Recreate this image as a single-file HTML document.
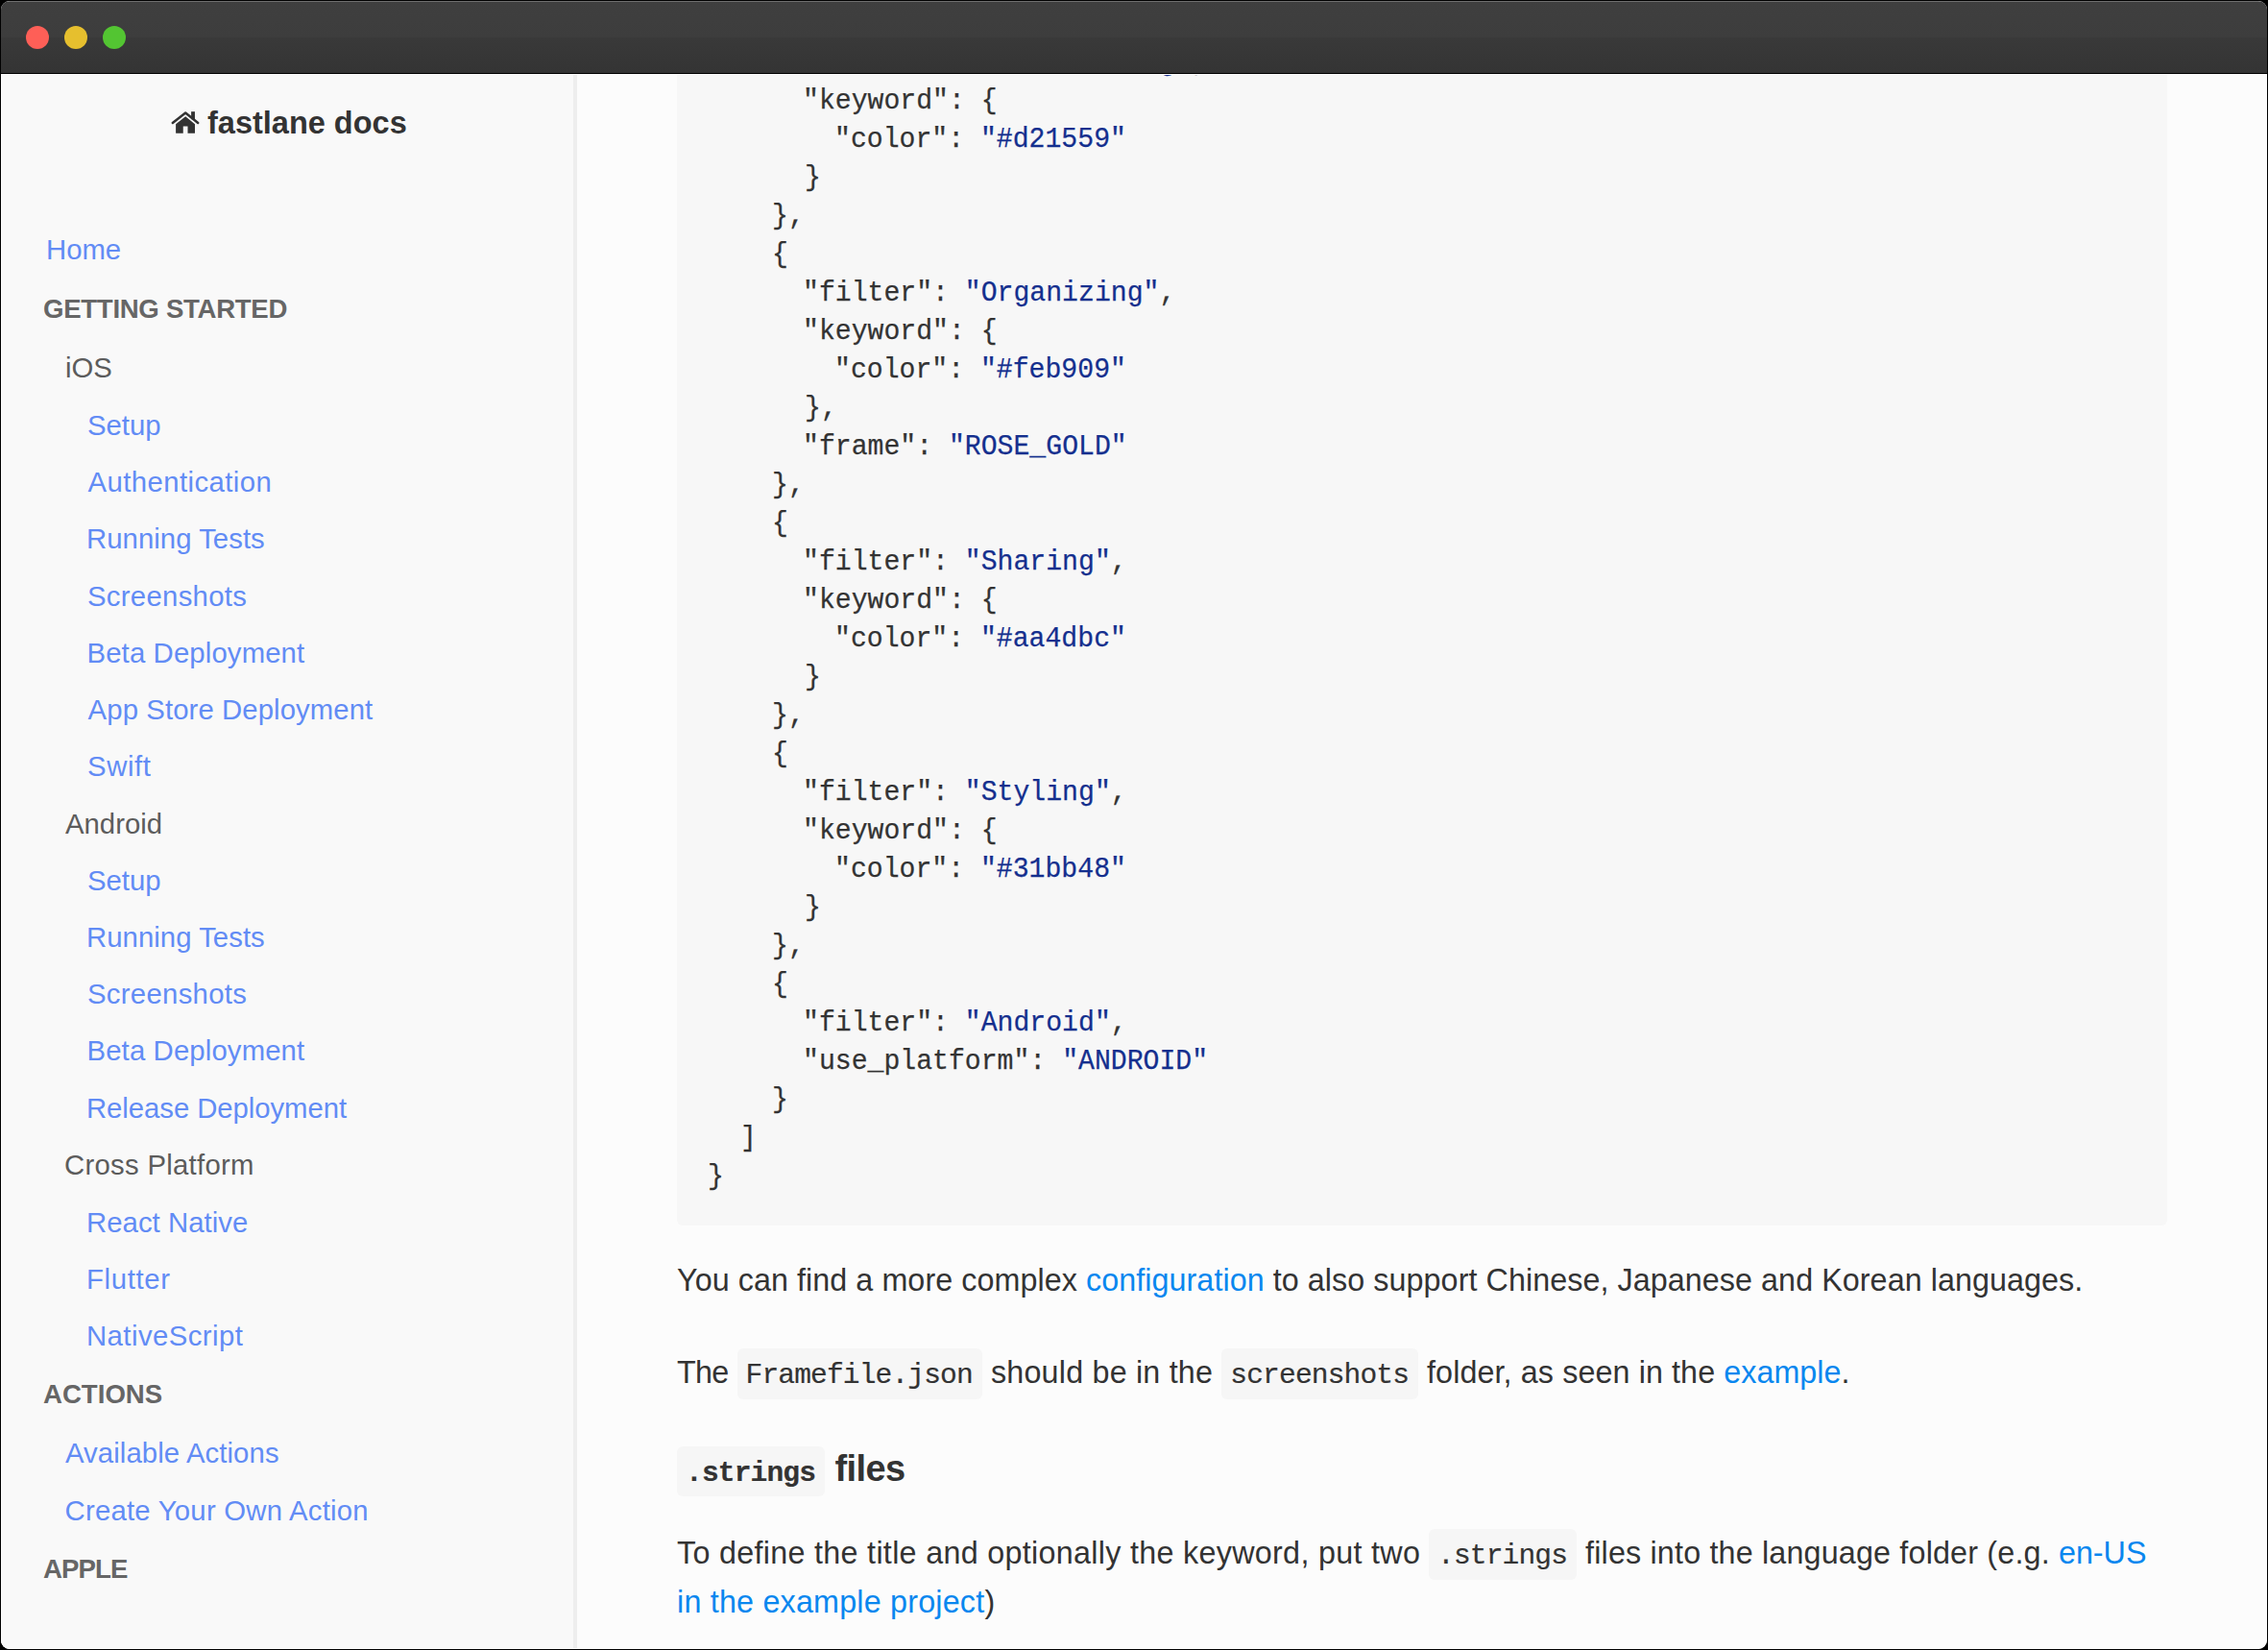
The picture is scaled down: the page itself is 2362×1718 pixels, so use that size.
<!DOCTYPE html>
<html><head><meta charset="utf-8"><style>
html,body{margin:0;padding:0;background:#000;width:2362px;height:1718px;overflow:hidden}
.win{position:absolute;left:1px;top:1px;width:2360px;height:1716px;border-radius:9px;overflow:hidden;background:#fcfcfc}
.in{position:absolute;left:-1px;top:-1px;width:2362px;height:1718px}
.tb{position:absolute;left:0;top:1px;width:2362px;height:74px;background:linear-gradient(#3f3f3f 0%,#3d3d3d 49%,#393939 51%,#343434 100%);border-top:1px solid #6e6e6e;border-bottom:1px solid #000}
.edge{position:absolute;left:1px;top:77px;width:2358px;height:1638px;border:1px solid #fff;border-radius:0 0 9px 9px}
.dot{position:absolute;top:27px;width:24px;height:24px;border-radius:50%}
.side{position:absolute;left:0;top:77px;width:597px;height:1641px;background:#f9f9f9}
.sbr{position:absolute;left:597px;top:77px;width:4px;height:1641px;background:#eeeeee}
.code{position:absolute;left:705px;top:40px;width:1552px;height:1236px;background:#f7f7f7;border-radius:6px}
.t{position:absolute;white-space:pre}
.ic{font-family:'Liberation Mono',monospace;font-size:29.6px;letter-spacing:-0.88px;background:#f6f6f6;border-radius:6px;padding:10.8px 9.9px 7.9px 9px;-webkit-text-stroke:0.2px currentColor}
</style></head><body>
<div class="win"><div class="in">
<div class="side"></div>
<div class="sbr"></div>
<div class="code"></div>
<div class="t" style="left:216.00px;top:112.48px;font-size:32.5px;line-height:32.5px;color:#333333;font-weight:700;font-family:'Liberation Sans', sans-serif;">fastlane docs</div>
<div class="t" style="left:48.00px;top:245.19px;font-size:29.3px;line-height:29.3px;color:#628cf5;font-weight:400;font-family:'Liberation Sans', sans-serif;letter-spacing:0px;">Home</div>
<div class="t" style="left:45.00px;top:307.63px;font-size:27.6px;line-height:27.6px;color:#666666;font-weight:700;font-family:'Liberation Sans', sans-serif;letter-spacing:-0.3px;">GETTING STARTED</div>
<div class="t" style="left:68.00px;top:367.69px;font-size:29.3px;line-height:29.3px;color:#5c5c5c;font-weight:400;font-family:'Liberation Sans', sans-serif;letter-spacing:0px;">iOS</div>
<div class="t" style="left:91.00px;top:428.19px;font-size:29.3px;line-height:29.3px;color:#628cf5;font-weight:400;font-family:'Liberation Sans', sans-serif;letter-spacing:0px;">Setup</div>
<div class="t" style="left:91.60px;top:487.39px;font-size:29.3px;line-height:29.3px;color:#628cf5;font-weight:400;font-family:'Liberation Sans', sans-serif;letter-spacing:0.42px;">Authentication</div>
<div class="t" style="left:90.00px;top:546.39px;font-size:29.3px;line-height:29.3px;color:#628cf5;font-weight:400;font-family:'Liberation Sans', sans-serif;letter-spacing:0.05px;">Running Tests</div>
<div class="t" style="left:91.00px;top:605.99px;font-size:29.3px;line-height:29.3px;color:#628cf5;font-weight:400;font-family:'Liberation Sans', sans-serif;letter-spacing:0.3px;">Screenshots</div>
<div class="t" style="left:90.50px;top:664.99px;font-size:29.3px;line-height:29.3px;color:#628cf5;font-weight:400;font-family:'Liberation Sans', sans-serif;letter-spacing:0.14px;">Beta Deployment</div>
<div class="t" style="left:91.60px;top:724.19px;font-size:29.3px;line-height:29.3px;color:#628cf5;font-weight:400;font-family:'Liberation Sans', sans-serif;letter-spacing:0.1px;">App Store Deployment</div>
<div class="t" style="left:91.00px;top:783.39px;font-size:29.3px;line-height:29.3px;color:#628cf5;font-weight:400;font-family:'Liberation Sans', sans-serif;letter-spacing:0.6px;">Swift</div>
<div class="t" style="left:68.00px;top:842.59px;font-size:29.3px;line-height:29.3px;color:#5c5c5c;font-weight:400;font-family:'Liberation Sans', sans-serif;letter-spacing:0px;">Android</div>
<div class="t" style="left:91.00px;top:901.79px;font-size:29.3px;line-height:29.3px;color:#628cf5;font-weight:400;font-family:'Liberation Sans', sans-serif;letter-spacing:0px;">Setup</div>
<div class="t" style="left:90.00px;top:960.99px;font-size:29.3px;line-height:29.3px;color:#628cf5;font-weight:400;font-family:'Liberation Sans', sans-serif;letter-spacing:0.05px;">Running Tests</div>
<div class="t" style="left:91.00px;top:1020.19px;font-size:29.3px;line-height:29.3px;color:#628cf5;font-weight:400;font-family:'Liberation Sans', sans-serif;letter-spacing:0.3px;">Screenshots</div>
<div class="t" style="left:90.50px;top:1079.39px;font-size:29.3px;line-height:29.3px;color:#628cf5;font-weight:400;font-family:'Liberation Sans', sans-serif;letter-spacing:0.14px;">Beta Deployment</div>
<div class="t" style="left:90.00px;top:1138.59px;font-size:29.3px;line-height:29.3px;color:#628cf5;font-weight:400;font-family:'Liberation Sans', sans-serif;letter-spacing:-0.05px;">Release Deployment</div>
<div class="t" style="left:67.00px;top:1197.79px;font-size:29.3px;line-height:29.3px;color:#5c5c5c;font-weight:400;font-family:'Liberation Sans', sans-serif;letter-spacing:0.29px;">Cross Platform</div>
<div class="t" style="left:90.00px;top:1258.19px;font-size:29.3px;line-height:29.3px;color:#628cf5;font-weight:400;font-family:'Liberation Sans', sans-serif;letter-spacing:0.05px;">React Native</div>
<div class="t" style="left:90.00px;top:1317.19px;font-size:29.3px;line-height:29.3px;color:#628cf5;font-weight:400;font-family:'Liberation Sans', sans-serif;letter-spacing:0.67px;">Flutter</div>
<div class="t" style="left:90.00px;top:1375.69px;font-size:29.3px;line-height:29.3px;color:#628cf5;font-weight:400;font-family:'Liberation Sans', sans-serif;letter-spacing:0.45px;">NativeScript</div>
<div class="t" style="left:45.00px;top:1438.13px;font-size:27.6px;line-height:27.6px;color:#666666;font-weight:700;font-family:'Liberation Sans', sans-serif;letter-spacing:0.0px;">ACTIONS</div>
<div class="t" style="left:68.00px;top:1497.99px;font-size:29.3px;line-height:29.3px;color:#628cf5;font-weight:400;font-family:'Liberation Sans', sans-serif;letter-spacing:0.1px;">Available Actions</div>
<div class="t" style="left:67.50px;top:1558.19px;font-size:29.3px;line-height:29.3px;color:#628cf5;font-weight:400;font-family:'Liberation Sans', sans-serif;letter-spacing:0.24px;">Create Your Own Action</div>
<div class="t" style="left:45.00px;top:1620.23px;font-size:27.6px;line-height:27.6px;color:#666666;font-weight:700;font-family:'Liberation Sans', sans-serif;letter-spacing:-0.8999999999999999px;">APPLE</div>
<div class="t" style="left:835.68px;top:51.48px;font-size:29.0px;line-height:29.0px;color:#333333;font-weight:400;font-family:'Liberation Mono', monospace;transform:scaleX(0.9701);transform-origin:0 0;-webkit-text-stroke:0.25px currentColor;"><span style="color:#333333">&quot;filter&quot;: </span><span style="color:#142f8e">&quot;Broadcasting&quot;</span><span style="color:#333333">,</span></div>
<div class="t" style="left:835.68px;top:91.48px;font-size:29.0px;line-height:29.0px;color:#333333;font-weight:400;font-family:'Liberation Mono', monospace;transform:scaleX(0.9701);transform-origin:0 0;-webkit-text-stroke:0.25px currentColor;"><span style="color:#333333">&quot;keyword&quot;: {</span></div>
<div class="t" style="left:869.44px;top:131.48px;font-size:29.0px;line-height:29.0px;color:#333333;font-weight:400;font-family:'Liberation Mono', monospace;transform:scaleX(0.9701);transform-origin:0 0;-webkit-text-stroke:0.25px currentColor;"><span style="color:#333333">&quot;color&quot;: </span><span style="color:#142f8e">&quot;#d21559&quot;</span></div>
<div class="t" style="left:838.18px;top:171.48px;font-size:29.0px;line-height:29.0px;color:#333333;font-weight:400;font-family:'Liberation Mono', monospace;transform:scaleX(0.9701);transform-origin:0 0;-webkit-text-stroke:0.25px currentColor;"><span style="color:#333333">}</span></div>
<div class="t" style="left:804.42px;top:211.48px;font-size:29.0px;line-height:29.0px;color:#333333;font-weight:400;font-family:'Liberation Mono', monospace;transform:scaleX(0.9701);transform-origin:0 0;-webkit-text-stroke:0.25px currentColor;"><span style="color:#333333">},</span></div>
<div class="t" style="left:804.42px;top:251.48px;font-size:29.0px;line-height:29.0px;color:#333333;font-weight:400;font-family:'Liberation Mono', monospace;transform:scaleX(0.9701);transform-origin:0 0;-webkit-text-stroke:0.25px currentColor;"><span style="color:#333333">{</span></div>
<div class="t" style="left:835.68px;top:291.48px;font-size:29.0px;line-height:29.0px;color:#333333;font-weight:400;font-family:'Liberation Mono', monospace;transform:scaleX(0.9701);transform-origin:0 0;-webkit-text-stroke:0.25px currentColor;"><span style="color:#333333">&quot;filter&quot;: </span><span style="color:#142f8e">&quot;Organizing&quot;</span><span style="color:#333333">,</span></div>
<div class="t" style="left:835.68px;top:331.48px;font-size:29.0px;line-height:29.0px;color:#333333;font-weight:400;font-family:'Liberation Mono', monospace;transform:scaleX(0.9701);transform-origin:0 0;-webkit-text-stroke:0.25px currentColor;"><span style="color:#333333">&quot;keyword&quot;: {</span></div>
<div class="t" style="left:869.44px;top:371.48px;font-size:29.0px;line-height:29.0px;color:#333333;font-weight:400;font-family:'Liberation Mono', monospace;transform:scaleX(0.9701);transform-origin:0 0;-webkit-text-stroke:0.25px currentColor;"><span style="color:#333333">&quot;color&quot;: </span><span style="color:#142f8e">&quot;#feb909&quot;</span></div>
<div class="t" style="left:838.18px;top:411.48px;font-size:29.0px;line-height:29.0px;color:#333333;font-weight:400;font-family:'Liberation Mono', monospace;transform:scaleX(0.9701);transform-origin:0 0;-webkit-text-stroke:0.25px currentColor;"><span style="color:#333333">},</span></div>
<div class="t" style="left:835.68px;top:451.48px;font-size:29.0px;line-height:29.0px;color:#333333;font-weight:400;font-family:'Liberation Mono', monospace;transform:scaleX(0.9701);transform-origin:0 0;-webkit-text-stroke:0.25px currentColor;"><span style="color:#333333">&quot;frame&quot;: </span><span style="color:#142f8e">&quot;ROSE_GOLD&quot;</span></div>
<div class="t" style="left:804.42px;top:491.48px;font-size:29.0px;line-height:29.0px;color:#333333;font-weight:400;font-family:'Liberation Mono', monospace;transform:scaleX(0.9701);transform-origin:0 0;-webkit-text-stroke:0.25px currentColor;"><span style="color:#333333">},</span></div>
<div class="t" style="left:804.42px;top:531.48px;font-size:29.0px;line-height:29.0px;color:#333333;font-weight:400;font-family:'Liberation Mono', monospace;transform:scaleX(0.9701);transform-origin:0 0;-webkit-text-stroke:0.25px currentColor;"><span style="color:#333333">{</span></div>
<div class="t" style="left:835.68px;top:571.48px;font-size:29.0px;line-height:29.0px;color:#333333;font-weight:400;font-family:'Liberation Mono', monospace;transform:scaleX(0.9701);transform-origin:0 0;-webkit-text-stroke:0.25px currentColor;"><span style="color:#333333">&quot;filter&quot;: </span><span style="color:#142f8e">&quot;Sharing&quot;</span><span style="color:#333333">,</span></div>
<div class="t" style="left:835.68px;top:611.48px;font-size:29.0px;line-height:29.0px;color:#333333;font-weight:400;font-family:'Liberation Mono', monospace;transform:scaleX(0.9701);transform-origin:0 0;-webkit-text-stroke:0.25px currentColor;"><span style="color:#333333">&quot;keyword&quot;: {</span></div>
<div class="t" style="left:869.44px;top:651.48px;font-size:29.0px;line-height:29.0px;color:#333333;font-weight:400;font-family:'Liberation Mono', monospace;transform:scaleX(0.9701);transform-origin:0 0;-webkit-text-stroke:0.25px currentColor;"><span style="color:#333333">&quot;color&quot;: </span><span style="color:#142f8e">&quot;#aa4dbc&quot;</span></div>
<div class="t" style="left:838.18px;top:691.48px;font-size:29.0px;line-height:29.0px;color:#333333;font-weight:400;font-family:'Liberation Mono', monospace;transform:scaleX(0.9701);transform-origin:0 0;-webkit-text-stroke:0.25px currentColor;"><span style="color:#333333">}</span></div>
<div class="t" style="left:804.42px;top:731.48px;font-size:29.0px;line-height:29.0px;color:#333333;font-weight:400;font-family:'Liberation Mono', monospace;transform:scaleX(0.9701);transform-origin:0 0;-webkit-text-stroke:0.25px currentColor;"><span style="color:#333333">},</span></div>
<div class="t" style="left:804.42px;top:771.48px;font-size:29.0px;line-height:29.0px;color:#333333;font-weight:400;font-family:'Liberation Mono', monospace;transform:scaleX(0.9701);transform-origin:0 0;-webkit-text-stroke:0.25px currentColor;"><span style="color:#333333">{</span></div>
<div class="t" style="left:835.68px;top:811.48px;font-size:29.0px;line-height:29.0px;color:#333333;font-weight:400;font-family:'Liberation Mono', monospace;transform:scaleX(0.9701);transform-origin:0 0;-webkit-text-stroke:0.25px currentColor;"><span style="color:#333333">&quot;filter&quot;: </span><span style="color:#142f8e">&quot;Styling&quot;</span><span style="color:#333333">,</span></div>
<div class="t" style="left:835.68px;top:851.48px;font-size:29.0px;line-height:29.0px;color:#333333;font-weight:400;font-family:'Liberation Mono', monospace;transform:scaleX(0.9701);transform-origin:0 0;-webkit-text-stroke:0.25px currentColor;"><span style="color:#333333">&quot;keyword&quot;: {</span></div>
<div class="t" style="left:869.44px;top:891.48px;font-size:29.0px;line-height:29.0px;color:#333333;font-weight:400;font-family:'Liberation Mono', monospace;transform:scaleX(0.9701);transform-origin:0 0;-webkit-text-stroke:0.25px currentColor;"><span style="color:#333333">&quot;color&quot;: </span><span style="color:#142f8e">&quot;#31bb48&quot;</span></div>
<div class="t" style="left:838.18px;top:931.48px;font-size:29.0px;line-height:29.0px;color:#333333;font-weight:400;font-family:'Liberation Mono', monospace;transform:scaleX(0.9701);transform-origin:0 0;-webkit-text-stroke:0.25px currentColor;"><span style="color:#333333">}</span></div>
<div class="t" style="left:804.42px;top:971.48px;font-size:29.0px;line-height:29.0px;color:#333333;font-weight:400;font-family:'Liberation Mono', monospace;transform:scaleX(0.9701);transform-origin:0 0;-webkit-text-stroke:0.25px currentColor;"><span style="color:#333333">},</span></div>
<div class="t" style="left:804.42px;top:1011.48px;font-size:29.0px;line-height:29.0px;color:#333333;font-weight:400;font-family:'Liberation Mono', monospace;transform:scaleX(0.9701);transform-origin:0 0;-webkit-text-stroke:0.25px currentColor;"><span style="color:#333333">{</span></div>
<div class="t" style="left:835.68px;top:1051.48px;font-size:29.0px;line-height:29.0px;color:#333333;font-weight:400;font-family:'Liberation Mono', monospace;transform:scaleX(0.9701);transform-origin:0 0;-webkit-text-stroke:0.25px currentColor;"><span style="color:#333333">&quot;filter&quot;: </span><span style="color:#142f8e">&quot;Android&quot;</span><span style="color:#333333">,</span></div>
<div class="t" style="left:835.68px;top:1091.48px;font-size:29.0px;line-height:29.0px;color:#333333;font-weight:400;font-family:'Liberation Mono', monospace;transform:scaleX(0.9701);transform-origin:0 0;-webkit-text-stroke:0.25px currentColor;"><span style="color:#333333">&quot;use_platform&quot;: </span><span style="color:#142f8e">&quot;ANDROID&quot;</span></div>
<div class="t" style="left:804.42px;top:1131.48px;font-size:29.0px;line-height:29.0px;color:#333333;font-weight:400;font-family:'Liberation Mono', monospace;transform:scaleX(0.9701);transform-origin:0 0;-webkit-text-stroke:0.25px currentColor;"><span style="color:#333333">}</span></div>
<div class="t" style="left:770.66px;top:1171.48px;font-size:29.0px;line-height:29.0px;color:#333333;font-weight:400;font-family:'Liberation Mono', monospace;transform:scaleX(0.9701);transform-origin:0 0;-webkit-text-stroke:0.25px currentColor;"><span style="color:#333333">]</span></div>
<div class="t" style="left:736.90px;top:1211.48px;font-size:29.0px;line-height:29.0px;color:#333333;font-weight:400;font-family:'Liberation Mono', monospace;transform:scaleX(0.9701);transform-origin:0 0;-webkit-text-stroke:0.25px currentColor;"><span style="color:#333333">}</span></div>
<div class="t" style="left:705.00px;top:1317.25px;font-size:32.3px;line-height:32.3px;color:#333333;font-weight:400;font-family:'Liberation Sans', sans-serif;"><span style="letter-spacing:0.06px">You can find a more complex <span style="color:#0987ef">configuration</span> to also support Chinese, Japanese and Korean languages.</span></div>
<div class="t" style="left:705.00px;top:1413.15px;font-size:32.3px;line-height:32.3px;color:#333333;font-weight:400;font-family:'Liberation Sans', sans-serif;"><span style="letter-spacing:-0.7px">The</span> <span class="ic" style="font-weight:400">Framefile.json</span><span style="letter-spacing:0.2px"> should be in the </span><span class="ic" style="font-weight:400">screenshots</span><span style="letter-spacing:0.1px"> folder, as seen in the </span><span style="color:#0987ef">example</span>.</div>
<div class="t" style="left:705.00px;top:1509.53px;font-size:38px;line-height:38.0px;color:#333333;font-weight:400;font-family:'Liberation Sans', sans-serif;"><span class="ic" style="font-weight:700">.strings</span> <span style="font-weight:700;letter-spacing:-0.6px">files</span></div>
<div class="t" style="left:705.00px;top:1601.15px;font-size:32.3px;line-height:32.3px;color:#333333;font-weight:400;font-family:'Liberation Sans', sans-serif;letter-spacing:0.3px;">To define the title and optionally the keyword, put two</div>
<div class="t" style="left:1488.00px;top:1601.15px;font-size:32.3px;line-height:32.3px;color:#333333;font-weight:400;font-family:'Liberation Sans', sans-serif;"><span class="ic" style="font-weight:400">.strings</span><span style="letter-spacing:0.17px"> files into the language folder (e.g. </span><span style="color:#0987ef">en-US</span></div>
<div class="t" style="left:705.00px;top:1651.95px;font-size:32.3px;line-height:32.3px;color:#333333;font-weight:400;font-family:'Liberation Sans', sans-serif;"><span style="letter-spacing:0.2px"><span style="color:#0987ef">in the example project</span>)</span></div>
<svg style="position:absolute;left:174px;top:110px" width="40" height="35" viewBox="0 0 40 35"><polyline points="5.8,18 19.2,7.6 32.2,18" fill="none" stroke="#333" stroke-width="2.5" stroke-linecap="round" stroke-linejoin="round"/><rect x="25.1" y="6.2" width="3.85" height="8" fill="#333"/><path d="M9.1 19.3 L19.2 11.3 L29 19.3 L29 28.2 Q29 28.7 28.5 28.7 L21.5 28.7 L21.5 21.5 L16.75 21.5 L16.75 28.7 L9.6 28.7 Q9.1 28.7 9.1 28.2 Z" fill="#333"/></svg>
<div class="edge"></div>
<div class="tb"></div>
<div class="dot" style="left:27px;background:#fe5f57"></div>
<div class="dot" style="left:67px;background:#e6bf2e"></div>
<div class="dot" style="left:107px;background:#53c532"></div>
</div></div>
</body></html>
